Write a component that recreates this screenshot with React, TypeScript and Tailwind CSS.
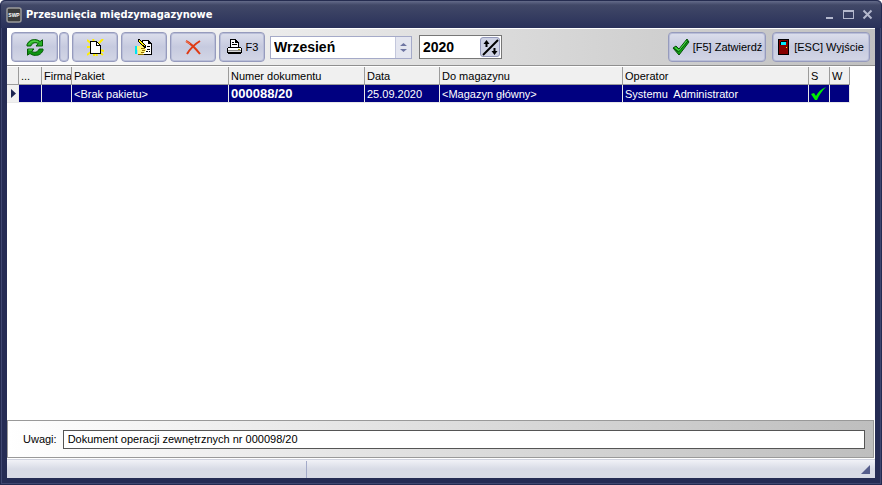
import { useState } from "react";
import type { ReactNode } from "react";

interface Transfer {
  id: string;
  packageName: string;
  documentNumber: string;
  date: string;
  warehouse: string;
  operator: string;
  confirmed: boolean;
  notes: string;
}

const MONTHS = [
  "Styczeń", "Luty", "Marzec", "Kwiecień", "Maj", "Czerwiec",
  "Lipiec", "Sierpień", "Wrzesień", "Październik", "Listopad", "Grudzień",
];

const COLUMNS = [
  { label: "", width: "w-[12px]" },
  { label: "...", width: "w-[23px]" },
  { label: "Firma", width: "w-[30px]" },
  { label: "Pakiet", width: "w-[157px]" },
  { label: "Numer dokumentu", width: "w-[136px]" },
  { label: "Data", width: "w-[75px]" },
  { label: "Do magazynu", width: "w-[183px]" },
  { label: "Operator", width: "w-[186px]" },
  { label: "S", width: "w-[21px]" },
  { label: "W", width: "w-[20px]" },
];

const TRANSFERS: Transfer[] = [
  {
    id: "88",
    packageName: "<Brak pakietu>",
    documentNumber: "000088/20",
    date: "25.09.2020",
    warehouse: "<Magazyn główny>",
    operator: "Systemu  Administrator",
    confirmed: true,
    notes: "Dokument operacji zewnętrznych nr 000098/20",
  },
];

function RefreshIcon() {
  return (
    <svg width="18" height="17" viewBox="0 0 18 17">
      <g stroke="#045a04" strokeWidth="1" strokeLinejoin="round">
        <path d="M1 7V5.500C3 1.500 5.500 .6 8.500 .6C11 .6 12.500 1.300 14 2.500L16.500 .8V7H10L12.200 4.600C9.500 3 6.500 3.500 4.800 7Z" fill="#27b026" />
        <path d="M17 10V11.500C15 15.500 12.500 16.400 9.500 16.400C7 16.400 5.500 15.700 4 14.500L1.500 16.200V10H8L5.800 12.400C8.500 14 11.500 13.500 13.200 10Z" fill="#0f9412" />
      </g>
      <path d="M3 5.500C5 2 8 1.300 12 3" fill="none" stroke="#63dc52" strokeWidth="1" />
      <path d="M2.500 11H6" fill="none" stroke="#63dc52" strokeWidth="1" />
    </svg>
  );
}

function NewIcon() {
  return (
    <svg width="17" height="17" viewBox="0 0 17 17">
      <path d="M0 1L5 5M16 0L11 5M6 0L7 3M0 8H4M13 11L17 12M0 16L5 12M16 16L12 13M7 17V13M10 17L9 14" stroke="#ffee00" strokeWidth="2" />
      <g shapeRendering="crispEdges">
        <path d="M4 3H9V7H13V14H4Z" fill="#fff" />
        <path d="M3 2H10V3H11V4H12V5H13V6H14V15H3ZM4 3V14H13V7H9V3Z" fill="#000" fillRule="evenodd" />
        <path d="M10 4H11V5H12V6H10Z" fill="#fff" />
      </g>
    </svg>
  );
}

function EditIcon() {
  return (
    <svg width="18" height="17" viewBox="0 0 18 17" shapeRendering="crispEdges">
      <path d="M7 1H14V2H15V3H16V4H17V16H7Z" fill="#000" />
      <path d="M8 2H13V5H16V15H8Z" fill="#fff" />
      <path d="M14 3H15V4H14ZM12 7H15V8H12ZM12 10H15V11H12ZM11 12H13V13H11ZM14 12H15V13H14Z" fill="#000" />
      <path d="M2 7H5V6H8V8H10V10H11V12H10V14H8V15H3Z" fill="#fff27a" />
      <path d="M6 9H10V10H6ZM7 11H10V12H7ZM6 13H9V14H6ZM3 15H9V16H3Z" fill="#8e6b00" />
      <path d="M0 7H2V15H0Z" fill="#00e5ee" />
      <path d="M3 0H5V1H6V2H7V3H8V4H9V5H10V6H11V9H9V8H8V7H7V6H6V5H5V4H4V3H3Z" fill="#000" />
      <path d="M4 1H5V2H6V3H7V4H8V5H9V6H10V7H9V6H8V6H7V5H6V4H5V3H4Z" fill="#fff200" />
    </svg>
  );
}

function DeleteIcon() {
  return (
    <svg width="17" height="15" viewBox="0 0 17 15">
      <path d="M1 1C5 3 11 9 15 14" fill="none" stroke="#df3b15" strokeWidth="2" />
      <path d="M15 1C10 4 5 9 2 14" fill="none" stroke="#df3b15" strokeWidth="2" />
      <path d="M1 1L5 4" stroke="#f08062" strokeWidth="1" />
    </svg>
  );
}

function PrinterIcon() {
  return (
    <svg width="17" height="16" viewBox="0 0 17 16" shapeRendering="crispEdges">
      <path d="M4 0H10V1H11V2H12V3H13V8H15V9H16V14H15V15H2V14H1V9H2V8H4Z" fill="#000" />
      <path d="M5 1H9V4H12V8H5Z" fill="#fff" />
      <path d="M6 3H8V4H6ZM6 5H11V6H6ZM10 2H11V3H10Z" fill="#000" />
      <path d="M2 9H15V11H2Z" fill="#fff" />
      <path d="M2 11H15V12H2Z" fill="#8c8c8c" />
      <path d="M2 12H15V13H2Z" fill="#d8d8d8" />
      <path d="M12 10H14V11H12Z" fill="#b0a000" />
    </svg>
  );
}

function ConfirmIcon() {
  return (
    <svg width="18" height="18" viewBox="0 0 18 18">
      <path d="M1 10L4 8L7 11L15 1L17 4L7 17Z" fill="#14ab17" stroke="#064e08" strokeWidth="1" strokeLinejoin="round" />
      <path d="M2 10.500L6.500 14L16 3" fill="none" stroke="#064e08" strokeWidth="1" />
      <path d="M3 9.500L7 12.500L14.500 3" fill="none" stroke="#52dc4b" strokeWidth="1" />
    </svg>
  );
}

function DoorIcon() {
  return (
    <svg width="11" height="17" viewBox="0 0 11 17" shapeRendering="crispEdges">
      <path d="M0 0H11V16H0Z" fill="#000" />
      <path d="M1 1H10V15H1Z" fill="#860000" />
      <path d="M3 3H8V6H3Z" fill="#00eaff" />
      <path d="M3 2H9V3H3ZM2 3H3V6H2Z" fill="#000" />
      <path d="M8 8H9V9H8Z" fill="#fff200" />
    </svg>
  );
}

function ToolButton({ label, width, children }: { label?: string; width: string; children?: ReactNode }) {
  return (
    <button
      type="button"
      aria-label={label}
      className={`flex h-[30px] shrink-0 items-center justify-center gap-[3px] rounded-[4px] border border-[#969bbd] bg-linear-to-b from-[#dcdfec] via-[#c6cadf] to-[#d3d6e6] whitespace-nowrap shadow-[inset_0_0_0_1px_#b9bed8] ${width}`}
    >
      {children}
    </button>
  );
}

function TitleBar() {
  return (
    <header className="flex h-[28px] shrink-0 items-center gap-1 rounded-t-[5px] border-t border-[#252c50] bg-linear-to-b from-[#646b89] from-0% via-[#414867] via-15% to-[#2a315a] pr-2 pl-[5px]">
      <svg width="16" height="16" viewBox="0 0 16 16">
        <rect x="1" y="1" width="14" height="14" rx="2" fill="#3b3b3b" stroke="#9a9a9a" strokeWidth="1.500" />
        <text x="8" y="10" textAnchor="middle" fontFamily="Liberation Sans" fontSize="5" fontWeight="bold" fill="#fff">SWP</text>
      </svg>
      <h1 className="flex-1 font-['DejaVu_Sans_Condensed','Noto_Sans',sans-serif] text-[11px] leading-4 font-bold text-white">
        Przesunięcia międzymagazynowe
      </h1>
      <div className="flex items-center gap-2 text-[#b4b8cd]">
        <button type="button" aria-label="Minimalizuj">
          <svg width="11" height="11" viewBox="0 0 11 11"><path d="M2 8H9V10H2Z" fill="currentColor" /></svg>
        </button>
        <button type="button" aria-label="Maksymalizuj">
          <svg width="11" height="11" viewBox="0 0 11 11"><path d="M0 1H11V10H0ZM1 3V9H10V3Z" fill="currentColor" fillRule="evenodd" /></svg>
        </button>
        <button type="button" aria-label="Zamknij">
          <svg width="11" height="11" viewBox="0 0 11 11"><path d="M1.500 1.500L9.500 9.500M9.500 1.500L1.500 9.500" stroke="currentColor" strokeWidth="2" /></svg>
        </button>
      </div>
    </header>
  );
}

export default function App() {
  const [month, setMonth] = useState("Wrzesień");
  const [year, setYear] = useState("2020");
  const [notes, setNotes] = useState(TRANSFERS[0].notes);

  return (
    <div className="flex h-screen flex-col overflow-hidden rounded-t-[5px] border-x border-b border-[#232a50] bg-[#3f4770] font-['Liberation_Sans',Arial,sans-serif] text-[11px] text-black">
      <TitleBar />

      <main className="mx-px mb-px flex min-h-0 flex-1 flex-col border-x-[5px] border-b-[5px] border-[#252c54] bg-white">
        <div className="flex h-[38px] shrink-0 items-center border-t border-b border-t-white border-b-[#8f8f8f] bg-linear-to-r from-white to-[#c0c0c0] pr-[5px] pl-1">
          <div className="flex gap-[3px]">
            <div className="flex gap-px">
              <ToolButton label="Odśwież" width="w-[47px]"><RefreshIcon /></ToolButton>
              <ToolButton label="Opcje odświeżania" width="w-[10px]" />
            </div>
            <ToolButton label="Nowy" width="w-[46px]"><NewIcon /></ToolButton>
            <ToolButton label="Edytuj" width="w-[46px]"><EditIcon /></ToolButton>
            <ToolButton label="Usuń" width="w-[46px]"><DeleteIcon /></ToolButton>
            <ToolButton width="w-[46px]"><PrinterIcon />F3</ToolButton>
          </div>

          <div className="relative ml-[5px] w-[142px]">
            <select
              aria-label="Miesiąc"
              value={month}
              onChange={(e) => setMonth(e.target.value)}
              className="block h-[23px] w-full appearance-none border border-[#a5aac8] bg-white pl-[3px] text-[14px] font-bold"
            >
              {MONTHS.map((name) => (
                <option key={name}>{name}</option>
              ))}
            </select>
            <span className="pointer-events-none absolute inset-y-px right-px flex w-[16px] items-center justify-center border-l border-[#c3c7dc] bg-[#e4e6f0]">
              <svg width="7" height="9" viewBox="0 0 7 9"><path d="M3.500 0L7 3H0ZM3.500 9L0 6H7Z" fill="#6f76a3" /></svg>
            </span>
          </div>

          <div className="ml-[7px] flex h-[24px] w-[83px] items-center border border-[#777] bg-white pr-px">
            <input
              aria-label="Rok"
              value={year}
              onChange={(e) => setYear(e.target.value)}
              className="h-full min-w-0 flex-1 pl-[3px] text-[14px] font-bold outline-none"
            />
            <button type="button" aria-label="Zmień rok" className="flex size-[20px] items-center justify-center rounded-[3px] border border-[#9398ba] bg-[#ced2e4]">
              <svg width="17" height="17" viewBox="0 0 17 17">
                <path d="M1 16L16 1" stroke="#000" strokeWidth="2" />
                <path d="M4.500 8V3M12.500 9V14" stroke="#000" strokeWidth="2" />
                <path d="M4.500 1L7.500 5H1.500ZM12.500 16L9.500 12H15.500Z" fill="#000" />
              </svg>
            </button>
          </div>

          <div className="ml-auto flex gap-1.5">
            <ToolButton width="w-[98px]"><ConfirmIcon />[F5] Zatwierdź</ToolButton>
            <ToolButton width="w-[98px]"><DoorIcon /><span className="pl-0.5">[ESC] Wyjście</span></ToolButton>
          </div>
        </div>

        <div className="min-h-0 flex-1 overflow-hidden pt-px">
          <table className="w-[843px] table-fixed border-separate border-spacing-0 text-left">
            <thead>
              <tr className="h-[18px]">
                {COLUMNS.map((column, index) => (
                  <th
                    key={index}
                    className={`overflow-hidden border-r border-b border-[#9b9b9b] bg-[#f0f0f0] px-0.5 py-0 leading-4 font-normal whitespace-nowrap ${column.width}`}
                  >
                    {column.label}
                  </th>
                ))}
              </tr>
            </thead>
            <tbody>
              {TRANSFERS.map((item) => (
                <tr
                  key={item.id}
                  className="h-[18px] bg-[#000080] leading-4 whitespace-pre text-white *:border-r *:border-b *:border-[#e8e8e8] *:px-0.5 *:py-0"
                >
                  <td className="bg-[#f0f0f0]">
                    <svg width="5" height="9" viewBox="0 0 5 9" className="ml-0.5"><path d="M0 0L5 4.500L0 9Z" fill="#1c2450" /></svg>
                  </td>
                  <td />
                  <td />
                  <td>{item.packageName}</td>
                  <td className="text-[13px] font-bold">{item.documentNumber}</td>
                  <td>{item.date}</td>
                  <td>{item.warehouse}</td>
                  <td>{item.operator}</td>
                  <td>
                    {item.confirmed && (
                      <svg width="16" height="14" viewBox="0 0 16 14" role="img" aria-label="Zatwierdzony">
                        <path d="M0 7L3 6L5 9C7 5 10 2 15 0C11 4 8 8 6 13H4Z" fill="#00f000" />
                      </svg>
                    )}
                  </td>
                  <td />
                </tr>
              ))}
            </tbody>
          </table>
        </div>

        <div className="mr-px flex h-[38px] shrink-0 items-center gap-1.5 border border-[#999] bg-linear-to-r from-white to-[#bebebe] pr-2 pl-[15px]">
          <label htmlFor="notes">Uwagi:</label>
          <input
            id="notes"
            value={notes}
            onChange={(e) => setNotes(e.target.value)}
            className="h-[19px] min-w-0 flex-1 border border-[#555] bg-white px-1 outline-none"
          />
        </div>

        <footer className="mt-px flex h-[19px] shrink-0 items-end border-t border-[#d0d3df] bg-linear-to-b from-[#f1f2f7] to-[#d8dbe6] to-50%">
          <div className="h-[17px] w-[300px] border-r border-[#a3aac9]" />
          <svg width="10" height="10" viewBox="0 0 10 10" className="mr-1 mb-[3px] ml-auto"><path d="M9 0V9H0Z" fill="#555d8c" /></svg>
        </footer>
      </main>
    </div>
  );
}
